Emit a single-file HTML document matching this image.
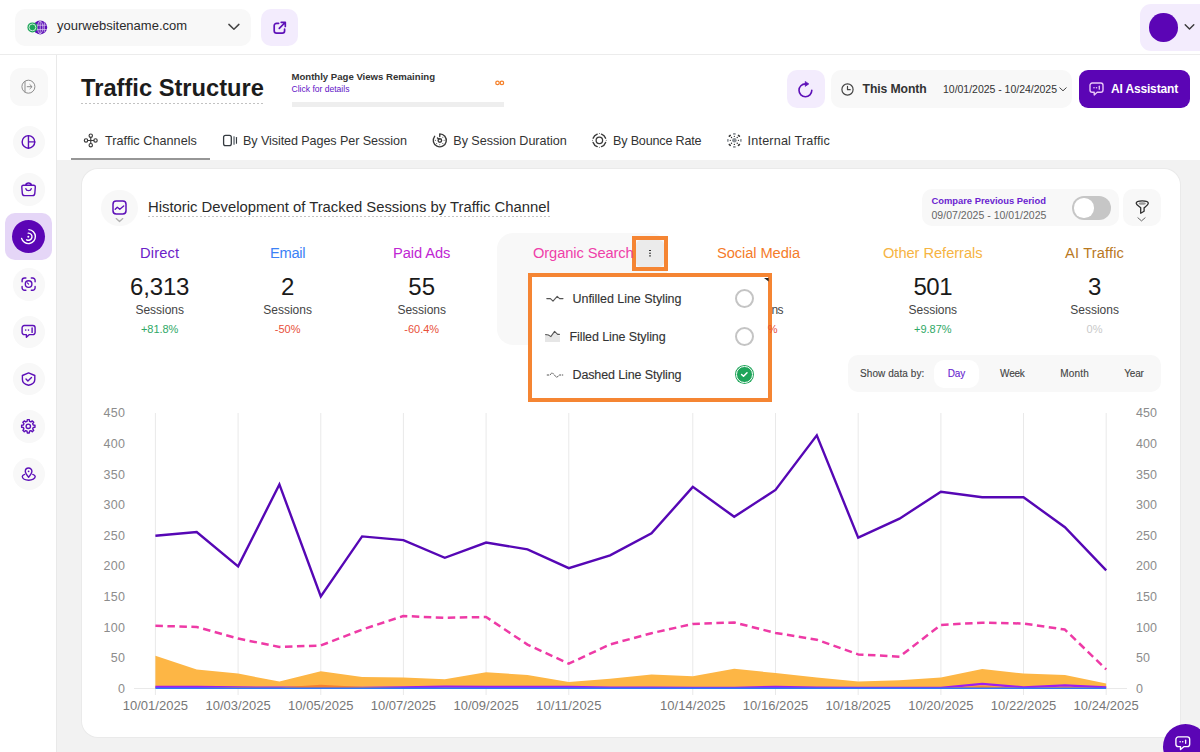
<!DOCTYPE html>
<html><head><meta charset="utf-8">
<style>
*{box-sizing:border-box;margin:0;padding:0}
html,body{width:1200px;height:752px;overflow:hidden;background:#fff}
body{font-family:"Liberation Sans",sans-serif;position:relative;color:#222}
.abs{position:absolute}
.t{position:absolute;white-space:nowrap;line-height:1}
svg{position:absolute;overflow:visible}
.sb{position:absolute;left:12.5px;width:32.4px;height:32.4px;border-radius:50%;background:#f8f8f8}
.p{fill:none;stroke:#5d10b8;stroke-width:1.5;stroke-linecap:round;stroke-linejoin:round}
.g{fill:none;stroke:#3a3a3a;stroke-width:1.3;stroke-linecap:round;stroke-linejoin:round}
</style></head><body>
<!-- top bar -->
<div class="abs" style="left:0;top:54px;width:1200px;height:1px;background:#ececec"></div>
<div class="abs" style="left:14.6px;top:9px;width:236px;height:37px;border-radius:10px;background:#f8f8f8"></div>
<svg style="left:26px;top:19px" width="24" height="17" viewBox="26 19 24 17">
  <circle cx="40.2" cy="27.4" r="7" fill="#5d10b8"/>
  <g stroke="#fff" stroke-width="0.75" fill="none" opacity="0.8">
    <ellipse cx="40.2" cy="27.4" rx="2.6" ry="6.3"/>
    <line x1="40.2" y1="21" x2="40.2" y2="34"/>
    <line x1="33.6" y1="25.2" x2="46.8" y2="25.2"/><line x1="33.6" y1="29.6" x2="46.8" y2="29.6"/>
    <line x1="44.3" y1="22.5" x2="44.3" y2="32.5"/>
  </g>
  <circle cx="32.4" cy="27.4" r="5" fill="#1fa55a"/>
  <circle cx="32.4" cy="27.4" r="3.4" fill="none" stroke="#d9f3e4" stroke-width="0.9"/>
</svg>
<svg style="left:228px;top:23px" width="12" height="8" viewBox="0 0 12 8"><path d="M0.9 1.4 L5.9 6.2 L10.9 1.4" fill="none" stroke="#444" stroke-width="1.5" stroke-linecap="round" stroke-linejoin="round"/></svg>
<div class="abs" style="left:261px;top:9px;width:37px;height:37px;border-radius:10px;background:#f3ecfd"></div>
<svg style="left:273px;top:21px" width="14" height="14" viewBox="0 0 14 14"><path class="p" style="stroke-width:1.7" d="M5.6 2.3 H3.6 A2.4 2.4 0 0 0 1.2 4.7 V9.8 A2.4 2.4 0 0 0 3.6 12.2 H9.2 A2.4 2.4 0 0 0 11.6 9.8 V8.2 M8.2 1.3 H12.3 V5.4 M12.1 1.5 L6.3 7.3"/></svg>
<!-- avatar -->
<div class="abs" style="left:1140px;top:4px;width:70px;height:47px;border-radius:11px;background:#f3ecfd"></div>
<div class="abs" style="left:1149px;top:13.2px;width:28.5px;height:28.5px;border-radius:50%;background:#5b05b5"></div>
<svg style="left:1184px;top:24px" width="11" height="7" viewBox="0 0 11 7"><path d="M1.2 0.7 L5.5 5.1 L9.8 0.7" fill="none" stroke="#3a3a3a" stroke-width="1.4" stroke-linecap="round" stroke-linejoin="round"/></svg>

<!-- sidebar -->
<div class="abs" style="left:56px;top:55px;width:1px;height:697px;background:#e9e9e9"></div>
<div class="abs" style="left:9.8px;top:68px;width:38px;height:38px;border-radius:11px;background:#f8f8f8"></div>
<div class="sb" style="top:125.9px"></div>
<div class="sb" style="top:173.4px"></div>
<div class="abs" style="left:5.3px;top:213.3px;width:46.3px;height:47.2px;border-radius:10px;background:#e5d6f7"></div>
<div class="abs" style="left:12px;top:220.3px;width:33px;height:33px;border-radius:50%;background:#5b05b5"></div>
<div class="sb" style="top:268.2px"></div>
<div class="sb" style="top:315.5px"></div>
<div class="sb" style="top:362.7px"></div>
<div class="sb" style="top:410.4px"></div>
<div class="sb" style="top:457.9px"></div>

<svg style="left:0;top:0" width="60" height="752" viewBox="0 0 60 752">
<circle cx="28.4" cy="86.7" r="6.5" fill="none" stroke="#8d8d8d" stroke-width="1"/><path d="M25 81.4 V92 M27.2 86.7 H31.8 M29.9 84.6 L32 86.7 L29.9 88.8" fill="none" stroke="#8d8d8d" stroke-width="1" stroke-linecap="round" stroke-linejoin="round"/>
<circle class="p" cx="28.45" cy="141.9" r="6.3" style="stroke-width:1.4"/><path class="p" style="stroke-width:1.4" d="M28.45 135.6 V148.2 M28.45 141.9 H34.75"/>
<path class="p" style="stroke-width:1.4" d="M23.4 185.3 H33.7 A1.6 1.6 0 0 1 35.3 187.1 L34.8 193.4 A2.4 2.4 0 0 1 32.4 195.6 H24.7 A2.4 2.4 0 0 1 22.3 193.4 L21.8 187.1 A1.6 1.6 0 0 1 23.4 185.3 Z M25.6 185.2 A3 2.7 0 0 1 31.5 185.2 M25.9 188.8 A2.7 2.3 0 0 0 31.2 188.8"/>
<g fill="none" stroke="#fff" stroke-width="1.4" stroke-linecap="round"><path d="M28.9 229.6 A7 7 0 1 1 21.6 238.4"/><path d="M28.2 233.1 A3.6 3.6 0 1 1 26.6 239.8"/></g><circle cx="28.3" cy="236.7" r="1" fill="#fff"/>
<path class="p" style="stroke-width:1.4" d="M22.1 281.8 V280.4 A2.4 2.4 0 0 1 24.5 278 H25.9 M31.3 278 H32.7 A2.4 2.4 0 0 1 35.1 280.4 V281.8 M35.1 286.4 V287.8 A2.4 2.4 0 0 1 32.7 290.2 H31.3 M25.9 290.2 H24.5 A2.4 2.4 0 0 1 22.1 287.8 V286.4"/><circle class="p" cx="28.6" cy="284.1" r="3.3" style="stroke-width:1.4"/><path class="p" style="stroke-width:1.1" d="M28.6 284.1 L27.4 282.9"/>
<path class="p" style="stroke-width:1.4" d="M24.3 325.5 H32.9 A2.2 2.2 0 0 1 35.1 327.7 V332.4 A2.2 2.2 0 0 1 32.9 334.6 H29.4 L26.4 337.3 V334.6 H24.3 A2.2 2.2 0 0 1 22.1 332.4 V327.7 A2.2 2.2 0 0 1 24.3 325.5 Z"/><circle cx="25.7" cy="330.1" r="0.8" fill="#5d10b8"/><circle cx="28.5" cy="330.1" r="0.8" fill="#5d10b8"/><path class="p" style="stroke-width:1.4" d="M32.1 327.9 V332.4"/>
<path class="p" style="stroke-width:1.4" d="M28.6 372.9 L34.8 375.5 V379.4 C34.8 382.4 32.2 384.3 28.6 385.2 C25 384.3 22.4 382.4 22.4 379.4 V375.5 Z M26 379 L27.9 380.9 L31.5 377.4"/>
<path class="p" style="stroke-width:1.4;stroke-linejoin:round" d="M34.97 425.30 L34.97 427.30 L33.25 427.53 L32.67 428.93 L33.73 430.31 L32.31 431.73 L30.93 430.67 L29.53 431.25 L29.30 432.97 L27.30 432.97 L27.07 431.25 L25.67 430.67 L24.29 431.73 L22.87 430.31 L23.93 428.93 L23.35 427.53 L21.63 427.30 L21.63 425.30 L23.35 425.07 L23.93 423.67 L22.87 422.29 L24.29 420.87 L25.67 421.93 L27.07 421.35 L27.30 419.63 L29.30 419.63 L29.53 421.35 L30.93 421.93 L32.31 420.87 L33.73 422.29 L32.67 423.67 L33.25 425.07 Z"/><circle class="p" cx="28.3" cy="426.3" r="2.2" style="stroke-width:1.4"/>
<path class="p" style="stroke-width:1.4" d="M28.6 477.2 C26.6 475 25.3 473.3 25.3 471.3 A3.3 3.3 0 0 1 31.9 471.3 C31.9 473.3 30.6 475 28.6 477.2 Z"/><circle cx="28.6" cy="471.3" r="0.9" fill="#5d10b8"/><path class="p" style="stroke-width:1.4" d="M24.6 474.4 C23.1 474.9 22.3 475.7 22.3 476.6 C22.3 478.6 25.1 480.2 28.7 480.2 C32.3 480.2 35.2 478.6 35.2 476.6 C35.2 475.7 34.4 474.9 32.8 474.4"/>
</svg>
<!-- header -->
<div class="abs" style="left:81px;top:102.6px;width:183px;height:1.4px;background:repeating-linear-gradient(90deg,#c2c2c2 0 2px,transparent 2px 4px)"></div>
<div class="abs" style="left:291.5px;top:101.7px;width:212.6px;height:5.8px;background:#eeeeee"></div>
<svg style="left:0;top:0" width="1200" height="120" viewBox="0 0 1200 120"><g fill="none" stroke="#f5812a" stroke-width="1.25"><ellipse cx="497.5" cy="82.9" rx="1.75" ry="1.7"/><ellipse cx="501.9" cy="82.9" rx="1.75" ry="1.7"/></g></svg>
<!-- tabs icons -->
<svg style="left:0;top:0" width="1200" height="160" viewBox="0 0 1200 160"><g class="g" style="stroke-width:1.15"><circle cx="90.76" cy="135.73" r="1.7"/><circle cx="90.76" cy="145.23" r="1.7"/><circle cx="86.01" cy="140.48" r="1.7"/><circle cx="95.51" cy="140.48" r="1.7"/><path d="M90.76 137.42999999999998 V143.53 M87.71000000000001 140.48 H93.81"/></g></svg>
<svg style="left:0;top:0" width="1200" height="160" viewBox="0 0 1200 160"><rect x="223.6" y="135.4" width="7.7" height="10.3" rx="1.9" fill="none" stroke="#353b40" stroke-width="1.3"/><rect x="233.15" y="136.2" width="1.8" height="8.5" rx="0.5" fill="#8b9197"/><rect x="235.9" y="137" width="1.15" height="6.8" rx="0.5" fill="#353b40"/></svg>
<svg style="left:0;top:0" width="1200" height="160" viewBox="0 0 1200 160"><g class="g" style="stroke-width:1.4"><path d="M439.76 136.46 V133.86 A6.5 6.5 0 1 1 434.64 136.36"/><circle cx="439.86" cy="140.56" r="1.75"/><path d="M438.86 139.36 L437.46 138.06"/></g><circle cx="444.11" cy="140.36" r="0.5" fill="#3a3a3a"/><circle cx="442.84" cy="143.44" r="0.5" fill="#3a3a3a"/><circle cx="439.76" cy="144.71" r="0.5" fill="#3a3a3a"/><circle cx="436.68" cy="143.44" r="0.5" fill="#3a3a3a"/><circle cx="435.41" cy="140.36" r="0.5" fill="#3a3a3a"/><circle cx="442.84" cy="137.28" r="0.5" fill="#3a3a3a"/></svg>
<svg style="left:0;top:0" width="1200" height="160" viewBox="0 0 1200 160"><g class="g" style="stroke-width:1.4"><path d="M605.60 142.51 A6.6 6.6 0 0 1 601.51 146.60 M597.21 146.60 A6.6 6.6 0 0 1 593.12 142.51 M593.12 138.21 A6.6 6.6 0 0 1 597.21 134.12 M601.51 134.12 A6.6 6.6 0 0 1 605.60 138.21 "/><circle cx="599.36" cy="140.36" r="3.25" style="stroke-width:1.3"/></g><circle cx="606.26" cy="140.36" r="0.5" fill="#555"/><circle cx="599.36" cy="147.26" r="0.5" fill="#555"/><circle cx="592.46" cy="140.36" r="0.5" fill="#555"/><circle cx="599.36" cy="133.46" r="0.5" fill="#555"/></svg>
<svg style="left:0;top:0" width="1200" height="160" viewBox="0 0 1200 160"><circle cx="734.36" cy="140.36" r="2.25" fill="#8b9197"/><circle cx="738.41" cy="140.36" r="0.68" fill="#2d2d2d"/><rect x="-1.30" y="-0.80" width="2.6" height="1.6" rx="0.5" fill="#8b9197" transform="translate(740.86 140.36) rotate(90)"/><circle cx="737.22" cy="143.22" r="0.68" fill="#2d2d2d"/><rect x="-1.30" y="-0.80" width="2.6" height="1.6" rx="0.5" fill="#3a3a3a" transform="translate(738.96 144.96) rotate(135)"/><circle cx="734.36" cy="144.41" r="0.68" fill="#2d2d2d"/><rect x="-1.30" y="-0.80" width="2.6" height="1.6" rx="0.5" fill="#8b9197" transform="translate(734.36 146.86) rotate(180)"/><circle cx="731.50" cy="143.22" r="0.68" fill="#2d2d2d"/><rect x="-1.30" y="-0.80" width="2.6" height="1.6" rx="0.5" fill="#3a3a3a" transform="translate(729.76 144.96) rotate(225)"/><circle cx="730.31" cy="140.36" r="0.68" fill="#2d2d2d"/><rect x="-1.30" y="-0.80" width="2.6" height="1.6" rx="0.5" fill="#8b9197" transform="translate(727.86 140.36) rotate(270)"/><circle cx="731.50" cy="137.50" r="0.68" fill="#2d2d2d"/><rect x="-1.30" y="-0.80" width="2.6" height="1.6" rx="0.5" fill="#3a3a3a" transform="translate(729.76 135.76) rotate(315)"/><circle cx="734.36" cy="136.31" r="0.68" fill="#2d2d2d"/><rect x="-1.30" y="-0.80" width="2.6" height="1.6" rx="0.5" fill="#8b9197" transform="translate(734.36 133.86) rotate(360)"/><circle cx="737.22" cy="137.50" r="0.68" fill="#2d2d2d"/><rect x="-1.30" y="-0.80" width="2.6" height="1.6" rx="0.5" fill="#3a3a3a" transform="translate(738.96 135.76) rotate(405)"/></svg>
<!-- header right -->
<div class="abs" style="left:787px;top:70px;width:37.5px;height:38px;border-radius:10px;background:#f3ecfd"></div>
<svg style="left:0;top:0" width="1200" height="120" viewBox="0 0 1200 120"><path d="M805.4 83.9 A6.4 6.4 0 1 0 811.8 90.3" fill="none" stroke="#5d10b8" stroke-width="1.6" stroke-linecap="round"/><path d="M805.2 81.4 L808.9 83.9 L805.2 86.4 Z" fill="#5d10b8" stroke="#5d10b8" stroke-width="0.6" stroke-linejoin="round"/></svg>
<div class="abs" style="left:831px;top:70px;width:241px;height:38px;border-radius:10px;background:#f8f8f8"></div>
<svg style="left:840.5px;top:82.5px" width="13" height="13" viewBox="0 0 13 13"><circle cx="6.5" cy="6.5" r="5.6" fill="none" stroke="#444" stroke-width="1.2"/><path d="M6.5 3.4 V6.7 H9.2" fill="none" stroke="#444" stroke-width="1.2" stroke-linecap="round" stroke-linejoin="round"/></svg>
<svg style="left:1058.5px;top:86.5px" width="8" height="5" viewBox="0 0 8 5"><path d="M0.8 0.8 L4 3.8 L7.2 0.8" fill="none" stroke="#444" stroke-width="1" stroke-linecap="round" stroke-linejoin="round"/></svg>
<div class="abs" style="left:1079px;top:70px;width:111px;height:38px;border-radius:9px;background:#5b05b5"></div>
<svg style="left:1088.5px;top:82px" width="15" height="14" viewBox="0 0 15 14"><path d="M3.2 1 H11.8 A2.2 2.2 0 0 1 14 3.2 V8 A2.2 2.2 0 0 1 11.8 10.2 H8.2 L5.2 12.9 V10.2 H3.2 A2.2 2.2 0 0 1 1 8 V3.2 A2.2 2.2 0 0 1 3.2 1 Z" fill="none" stroke="#e9c6f7" stroke-width="1.4" stroke-linejoin="round"/><circle cx="5" cy="5.7" r="0.8" fill="#e9c6f7"/><circle cx="7.5" cy="5.7" r="0.8" fill="#e9c6f7"/><path d="M10.3 4.2 V7.2" stroke="#e9c6f7" stroke-width="1.3" stroke-linecap="round"/></svg>
<!-- tab underline -->
<div class="abs" style="left:71px;top:158.2px;width:139px;height:1.8px;background:#969696"></div>

<!-- content -->
<div class="abs" style="left:57px;top:160px;width:1143px;height:592px;background:#f2f2f2"></div>
<div class="abs" style="left:81.5px;top:169.4px;width:1098.3px;height:567.4px;background:#fff;border-radius:16px;box-shadow:0 0 0 1px #eaeaea"></div>
<!-- card header -->
<div class="abs" style="left:101.3px;top:189.7px;width:36.3px;height:36.3px;border-radius:50%;background:#f8f8f8"></div>
<svg style="left:111.9px;top:200.1px" width="15" height="15" viewBox="0 0 15 15"><rect class="p" x="1" y="1" width="13" height="13" rx="3.2" style="stroke-width:1.5"/><path class="p" style="stroke-width:1.4" d="M3.2 9.2 L5.3 7.2 L7.8 9.2 L11.7 6"/></svg>
<svg style="left:114.9px;top:217.6px" width="9" height="5" viewBox="0 0 9 5"><path d="M1.2 0.6 L4.5 3.6 L7.8 0.6" fill="none" stroke="#b0b0b0" stroke-width="1.3" stroke-linecap="round" stroke-linejoin="round"/></svg>
<div class="abs" style="left:148px;top:215.5px;width:402px;height:1.2px;background:repeating-linear-gradient(90deg,#c4c4c4 0 2px,transparent 2px 4px)"></div>
<div class="abs" style="left:922px;top:189px;width:197px;height:37px;border-radius:10px;background:#f8f8f8"></div>
<div class="abs" style="left:1072px;top:196px;width:38.5px;height:23.5px;border-radius:12px;background:#c6c6c6"></div>
<div class="abs" style="left:1074.3px;top:198px;width:19.5px;height:19.5px;border-radius:50%;background:#fff"></div>
<div class="abs" style="left:1123px;top:189px;width:37.5px;height:37px;border-radius:10px;background:#f8f8f8"></div>
<svg style="left:0;top:0" width="1200" height="240" viewBox="0 0 1200 240"><ellipse cx="1142.2" cy="203.5" rx="3.6" ry="1.3" fill="#9a9a9a"/><path d="M1136.2 203.3 C1136.2 201.5 1139 200.9 1142.2 200.9 C1145.4 200.9 1148.3 201.5 1148.3 203.3 C1148.3 205 1145.3 206.6 1144.1 207.8 V211.2 L1140.7 213.2 V207.8 C1139.5 206.6 1136.2 205 1136.2 203.3 Z" fill="none" stroke="#2f2f2f" stroke-width="1.3" stroke-linejoin="round"/></svg>
<svg style="left:1137.3px;top:217.3px" width="9" height="5" viewBox="0 0 9 5"><path d="M0.9 0.8 L4.5 3.9 L8.1 0.8" fill="none" stroke="#666" stroke-width="1" stroke-linecap="round" stroke-linejoin="round"/></svg>
<!-- organic highlight -->
<div class="abs" style="left:497.3px;top:233px;width:170px;height:112px;border-radius:16px;background:#f8f8f8"></div>
<!-- show data by -->
<div class="abs" style="left:848px;top:355px;width:313px;height:37px;border-radius:10px;background:#f8f8f8"></div>
<div class="abs" style="left:933.6px;top:360px;width:45.6px;height:28px;border-radius:10px;background:#fff"></div>
<svg class="abs" style="left:0;top:0" width="1200" height="752" viewBox="0 0 1200 752">
<line x1="155.4" y1="413" x2="155.4" y2="695" stroke="#e9e9e9" stroke-width="1"/>
<line x1="238.1" y1="413" x2="238.1" y2="695" stroke="#e9e9e9" stroke-width="1"/>
<line x1="320.8" y1="413" x2="320.8" y2="695" stroke="#e9e9e9" stroke-width="1"/>
<line x1="403.4" y1="413" x2="403.4" y2="695" stroke="#e9e9e9" stroke-width="1"/>
<line x1="486.1" y1="413" x2="486.1" y2="695" stroke="#e9e9e9" stroke-width="1"/>
<line x1="568.8" y1="413" x2="568.8" y2="695" stroke="#e9e9e9" stroke-width="1"/>
<line x1="692.8" y1="413" x2="692.8" y2="695" stroke="#e9e9e9" stroke-width="1"/>
<line x1="775.5" y1="413" x2="775.5" y2="695" stroke="#e9e9e9" stroke-width="1"/>
<line x1="858.2" y1="413" x2="858.2" y2="695" stroke="#e9e9e9" stroke-width="1"/>
<line x1="940.9" y1="413" x2="940.9" y2="695" stroke="#e9e9e9" stroke-width="1"/>
<line x1="1023.5" y1="413" x2="1023.5" y2="695" stroke="#e9e9e9" stroke-width="1"/>
<line x1="1106.2" y1="413" x2="1106.2" y2="695" stroke="#e9e9e9" stroke-width="1"/>
<line x1="134" y1="688.5" x2="155.4" y2="688.5" stroke="#e9e9e9" stroke-width="1"/>
<line x1="1106.2" y1="688.5" x2="1127" y2="688.5" stroke="#e9e9e9" stroke-width="1"/>
<polygon points="155.4,688.2 155.4,655.8 196.7,669.4 238.1,673.6 279.4,681.6 320.8,671.3 362.1,676.9 403.4,677.4 444.8,679.2 486.1,672.3 527.5,675.0 568.8,681.9 610.1,678.7 651.5,674.4 692.8,676.3 734.2,668.7 775.5,673.1 816.8,677.5 858.2,681.6 899.5,680.2 940.9,677.4 982.2,668.9 1023.5,673.6 1064.9,675.0 1106.2,683.4 1106.2,688.2" fill="#fdb645"/>
<polyline points="155.4,686.8 196.7,686.8 238.1,687.5 279.4,687.7 320.8,687.9 362.1,687.9 403.4,687.5 444.8,686.7 486.1,686.8 527.5,687.0 568.8,687.0 610.1,687.7 651.5,687.7 692.8,687.9 734.2,687.9 775.5,686.9 816.8,687.7 858.2,687.9 899.5,687.9 940.9,687.9 982.2,683.9 1023.5,687.3 1064.9,685.3 1106.2,687.3" fill="none" stroke="#9d1cf2" stroke-width="2.3" stroke-linejoin="round"/>
<polygon points="155.4,688.2 155.4,687.9 196.7,687.9 238.1,687.3 279.4,687.6 320.8,684.8 362.1,687.0 403.4,687.9 444.8,687.9 486.1,687.9 527.5,687.9 568.8,687.9 610.1,687.9 651.5,687.9 692.8,687.9 734.2,687.9 775.5,687.9 816.8,687.9 858.2,687.9 899.5,687.9 940.9,687.9 982.2,686.1 1023.5,687.9 1064.9,687.3 1106.2,687.9 1106.2,688.2" fill="#f47c2c" fill-opacity="0.9"/>
<polyline points="155.4,688.2 196.7,688.2 238.1,688.2 279.4,688.2 320.8,688.2 362.1,688.2 403.4,688.2 444.8,688.2 486.1,688.2 527.5,688.2 568.8,688.2 610.1,688.2 651.5,688.2 692.8,688.2 734.2,688.2 775.5,688.2 816.8,688.2 858.2,688.2 899.5,688.2 940.9,688.2 982.2,688.2 1023.5,688.2 1064.9,688.2 1106.2,688.2" fill="none" stroke="#2f78f5" stroke-width="1.5"/>
<polyline points="155.4,625.8 196.7,627.0 238.1,638.6 279.4,646.9 320.8,645.5 362.1,629.6 403.4,616.0 444.8,617.8 486.1,617.0 527.5,644.6 568.8,663.7 610.1,644.4 651.5,633.2 692.8,623.9 734.2,622.5 775.5,632.9 816.8,639.7 858.2,654.4 899.5,656.7 940.9,624.9 982.2,622.7 1023.5,623.5 1064.9,629.6 1106.2,669.4" fill="none" stroke="#ee3aa6" stroke-width="2.5" stroke-dasharray="7.5 4.5" stroke-linejoin="round"/>
<polyline points="155.4,535.8 196.7,532.1 238.1,566.4 279.4,484.4 320.8,596.4 362.1,536.4 403.4,540.1 444.8,557.8 486.1,542.5 527.5,549.3 568.8,568.2 610.1,555.4 651.5,533.4 692.8,486.9 734.2,516.8 775.5,489.9 816.8,435.4 858.2,537.6 899.5,518.7 940.9,491.7 982.2,497.3 1023.5,497.3 1064.9,527.2 1106.2,570.4" fill="none" stroke="#5607b5" stroke-width="2.4" stroke-linejoin="miter"/>
</svg>
<!-- more button + orange boxes -->
<div class="abs" style="left:635.8px;top:240px;width:28.4px;height:27px;border-radius:5px;background:#ebebeb"></div>
<div class="abs" style="left:649.1px;top:249.9px;width:1.8px;height:1.6px;background:#333;box-shadow:0 2.7px 0 #333,0 5.4px 0 #333"></div>
<div class="abs" style="left:632px;top:236px;width:36px;height:35px;border:4px solid #f58533"></div>
<div class="abs" style="left:528px;top:273px;width:244px;height:129px;background:#fff;border:4.2px solid #f58533"></div>
<!-- menu icons -->
<svg style="left:545.5px;top:294px" width="18" height="10" viewBox="0 0 18 10"><path d="M0.8 4.6 H4.4 L7 7.2 L11.2 2.4 L13.6 4.6 H17" fill="none" stroke="#555" stroke-width="1.1" stroke-linejoin="round" stroke-linecap="round"/></svg>
<svg style="left:545.2px;top:329.8px" width="15" height="12" viewBox="0 0 15 12"><path d="M0 5.6 L3 6 L5.6 7.4 L9.6 2.4 L12.6 5.2 L15 5.4 V12 H0 Z" fill="#e6e6e6"/><path d="M0.6 4.6 L3.4 5 L5.8 6.6 L9.6 1.4 L12.6 4.4 L14.4 4.4" fill="none" stroke="#555" stroke-width="1.1" stroke-linejoin="round" stroke-linecap="round"/></svg>
<svg style="left:545.5px;top:369.5px" width="18" height="10" viewBox="0 0 18 10"><path d="M0.8 5 H3.8 L6.2 2.7 L10.8 7.5 L13.2 5 H17.2" fill="none" stroke="#555" stroke-width="1" stroke-linejoin="round" stroke-dasharray="2.4 0.8"/></svg>
<!-- radios -->
<div class="abs" style="left:735px;top:289.1px;width:19.3px;height:19.3px;border-radius:50%;border:2.1px solid #c4c4c4;background:#fff"></div>
<div class="abs" style="left:735px;top:326.8px;width:19.3px;height:19.3px;border-radius:50%;border:2.1px solid #c4c4c4;background:#fff"></div>
<div class="abs" style="left:734.9px;top:364.9px;width:19.3px;height:19.3px;border-radius:50%;background:#1fa55a"></div>
<div class="abs" style="left:736.3px;top:366.3px;width:16.5px;height:16.5px;border-radius:50%;border:1.1px solid #fff"></div>
<svg style="left:740.3px;top:371.3px" width="9" height="7" viewBox="0 0 9 7"><path d="M1.6 3.5 L3.5 5.3 L7 1.8" fill="none" stroke="#fff" stroke-width="1.5" stroke-linecap="round" stroke-linejoin="round"/></svg>
<svg style="left:763.5px;top:277.5px" width="5" height="4" viewBox="0 0 5 4"><path d="M0 0 H4.6 V3.6 Z" fill="#222"/></svg>
<!-- chat bubble -->
<div class="abs" style="left:1163px;top:724px;width:45px;height:45px;border-radius:50%;background:#5b05b5"></div>
<svg style="left:1174.6px;top:736.3px" width="15.6" height="14.7" viewBox="0 0 17 16"><path d="M3.6 1 H13.4 A2.6 2.6 0 0 1 16 3.6 V9 A2.6 2.6 0 0 1 13.4 11.6 H9.6 L6 14.8 V11.6 H3.6 A2.6 2.6 0 0 1 1 9 V3.6 A2.6 2.6 0 0 1 3.6 1 Z" fill="none" stroke="#fff" stroke-width="1.5" stroke-linejoin="round"/><circle cx="5.6" cy="6.3" r="0.9" fill="#fff"/><circle cx="8.4" cy="6.3" r="0.9" fill="#fff"/><path d="M11.6 4.6 V8" stroke="#fff" stroke-width="1.4" stroke-linecap="round"/></svg>
<span class="t" style="left:57.0px;top:19.3px;font-size:13px;color:#2b2b2b;">yourwebsitename.com</span>
<span class="t" style="left:81.0px;top:76.5px;font-size:23.7px;color:#1c1c1c;font-weight:700;">Traffic Structure</span>
<span class="t" style="left:291.5px;top:72.0px;font-size:9.6px;color:#333;font-weight:700;letter-spacing:-0.01px;">Monthly Page Views Remaining</span>
<span class="t" style="left:291.5px;top:85.3px;font-size:8.6px;color:#5f14c7;letter-spacing:-0.02px;">Click for details</span>
<span class="t" style="left:105.0px;top:134.6px;font-size:12.6px;color:#333;letter-spacing:0.06px;">Traffic Channels</span>
<span class="t" style="left:243.0px;top:134.6px;font-size:12.6px;color:#333;letter-spacing:-0.09px;">By Visited Pages Per Session</span>
<span class="t" style="left:453.3px;top:134.6px;font-size:12.6px;color:#333;letter-spacing:-0.04px;">By Session Duration</span>
<span class="t" style="left:613.0px;top:134.6px;font-size:12.6px;color:#333;letter-spacing:-0.19px;">By Bounce Rate</span>
<span class="t" style="left:747.6px;top:134.6px;font-size:12.6px;color:#333;letter-spacing:0.18px;">Internal Traffic</span>
<span class="t" style="left:862.6px;top:83.2px;font-size:12.2px;color:#333;font-weight:700;letter-spacing:-0.10px;">This Month</span>
<span class="t" style="left:943.0px;top:84.4px;font-size:10.5px;color:#333;letter-spacing:-0.02px;">10/01/2025 - 10/24/2025</span>
<span class="t" style="left:1111.0px;top:82.9px;font-size:12px;color:#fff;font-weight:700;letter-spacing:-0.16px;">AI Assistant</span>
<span class="t" style="left:148.0px;top:199.7px;font-size:14.85px;color:#2a2a2a;letter-spacing:-0.01px;">Historic Development of Tracked Sessions by Traffic Channel</span>
<span class="t" style="left:931.5px;top:196.3px;font-size:9.4px;color:#6a1fd0;font-weight:700;letter-spacing:-0.01px;">Compare Previous Period</span>
<span class="t" style="left:931.5px;top:209.7px;font-size:10.5px;color:#666;letter-spacing:0.02px;">09/07/2025 - 10/01/2025</span>
<span class="t" style="left:140.0px;top:246.2px;font-size:14.7px;color:#6b21c8;letter-spacing:0.16px;">Direct</span>
<span class="t" style="left:130.1px;top:275.0px;font-size:24px;color:#1a1a1a;letter-spacing:-0.17px;">6,313</span>
<span class="t" style="left:135.4px;top:304.0px;font-size:12px;color:#444;letter-spacing:-0.01px;">Sessions</span>
<span class="t" style="left:140.9px;top:323.8px;font-size:11px;color:#2fa866;letter-spacing:-0.02px;">+81.8%</span>
<span class="t" style="left:270.1px;top:246.2px;font-size:14.7px;color:#3b82f6;letter-spacing:-0.35px;">Email</span>
<span class="t" style="left:280.9px;top:275.0px;font-size:24px;color:#1a1a1a;">2</span>
<span class="t" style="left:263.3px;top:304.0px;font-size:12px;color:#444;letter-spacing:-0.01px;">Sessions</span>
<span class="t" style="left:274.8px;top:323.8px;font-size:11px;color:#e8503a;">-50%</span>
<span class="t" style="left:392.9px;top:246.2px;font-size:14.7px;color:#c026d3;letter-spacing:-0.06px;">Paid Ads</span>
<span class="t" style="left:408.3px;top:275.0px;font-size:24px;color:#1a1a1a;">55</span>
<span class="t" style="left:397.4px;top:304.0px;font-size:12px;color:#444;letter-spacing:-0.01px;">Sessions</span>
<span class="t" style="left:404.3px;top:323.8px;font-size:11px;color:#e8503a;">-60.4%</span>
<span class="t" style="left:883.0px;top:246.2px;font-size:14.7px;color:#f6b443;letter-spacing:-0.06px;">Other Referrals</span>
<span class="t" style="left:913.4px;top:275.0px;font-size:24px;color:#1a1a1a;letter-spacing:-0.42px;">501</span>
<span class="t" style="left:908.5px;top:304.0px;font-size:12px;color:#444;letter-spacing:-0.01px;">Sessions</span>
<span class="t" style="left:914.0px;top:323.8px;font-size:11px;color:#2fa866;">+9.87%</span>
<span class="t" style="left:1065.1px;top:246.2px;font-size:14.7px;color:#b9791f;letter-spacing:0.13px;">AI Traffic</span>
<span class="t" style="left:1087.9px;top:275.0px;font-size:24px;color:#1a1a1a;">3</span>
<span class="t" style="left:1070.3px;top:304.0px;font-size:12px;color:#444;letter-spacing:-0.01px;">Sessions</span>
<span class="t" style="left:1086.6px;top:323.8px;font-size:11px;color:#c9c9c9;">0%</span>
<span class="t" style="left:533.0px;top:246.2px;font-size:14.7px;color:#ef3fa9;letter-spacing:-0.10px;">Organic Search</span>
<span class="t" style="left:717.0px;top:246.2px;font-size:14.7px;color:#f57c2a;letter-spacing:-0.09px;">Social Media</span>
<span class="t" style="left:771.5px;top:304.0px;font-size:12px;color:#444;letter-spacing:-0.59px;">ns</span>
<span class="t" style="left:767.8px;top:324.3px;font-size:11px;color:#e8503a;">%</span>
<span class="t" style="left:572.5px;top:293.0px;font-size:12.5px;color:#333;letter-spacing:-0.04px;-webkit-text-stroke:0.12px currentColor;">Unfilled Line Styling</span>
<span class="t" style="left:569.5px;top:330.5px;font-size:12.5px;color:#333;letter-spacing:-0.10px;-webkit-text-stroke:0.12px currentColor;">Filled Line Styling</span>
<span class="t" style="left:572.5px;top:368.5px;font-size:12.5px;color:#333;letter-spacing:-0.12px;-webkit-text-stroke:0.12px currentColor;">Dashed Line Styling</span>
<span class="t" style="left:860.0px;top:368.8px;font-size:10px;color:#444;letter-spacing:0.08px;-webkit-text-stroke:0.12px currentColor;">Show data by:</span>
<span class="t" style="left:947.8px;top:368.8px;font-size:10px;color:#6a1fd0;letter-spacing:-0.20px;-webkit-text-stroke:0.12px currentColor;">Day</span>
<span class="t" style="left:1000.1px;top:368.8px;font-size:10px;color:#444;letter-spacing:-0.20px;-webkit-text-stroke:0.12px currentColor;">Week</span>
<span class="t" style="left:1060.2px;top:368.8px;font-size:10px;color:#444;letter-spacing:0.20px;-webkit-text-stroke:0.12px currentColor;">Month</span>
<span class="t" style="left:1124.3px;top:368.8px;font-size:10px;color:#444;letter-spacing:-0.20px;-webkit-text-stroke:0.12px currentColor;">Year</span>
<span class="t" style="left:103.5px;top:407.4px;font-size:12.5px;color:#8c8c8c;letter-spacing:0.32px;">450</span>
<span class="t" style="left:1136.0px;top:407.4px;font-size:12.5px;color:#8c8c8c;letter-spacing:0.05px;">450</span>
<span class="t" style="left:103.5px;top:438.0px;font-size:12.5px;color:#8c8c8c;letter-spacing:0.32px;">400</span>
<span class="t" style="left:1136.0px;top:438.0px;font-size:12.5px;color:#8c8c8c;letter-spacing:0.05px;">400</span>
<span class="t" style="left:103.5px;top:468.6px;font-size:12.5px;color:#8c8c8c;letter-spacing:0.32px;">350</span>
<span class="t" style="left:1136.0px;top:468.6px;font-size:12.5px;color:#8c8c8c;letter-spacing:0.05px;">350</span>
<span class="t" style="left:103.5px;top:499.2px;font-size:12.5px;color:#8c8c8c;letter-spacing:0.32px;">300</span>
<span class="t" style="left:1136.0px;top:499.2px;font-size:12.5px;color:#8c8c8c;letter-spacing:0.05px;">300</span>
<span class="t" style="left:103.5px;top:529.8px;font-size:12.5px;color:#8c8c8c;letter-spacing:0.32px;">250</span>
<span class="t" style="left:1136.0px;top:529.8px;font-size:12.5px;color:#8c8c8c;letter-spacing:0.05px;">250</span>
<span class="t" style="left:103.5px;top:560.4px;font-size:12.5px;color:#8c8c8c;letter-spacing:0.32px;">200</span>
<span class="t" style="left:1136.0px;top:560.4px;font-size:12.5px;color:#8c8c8c;letter-spacing:0.05px;">200</span>
<span class="t" style="left:103.5px;top:591.0px;font-size:12.5px;color:#8c8c8c;letter-spacing:0.32px;">150</span>
<span class="t" style="left:1136.0px;top:591.0px;font-size:12.5px;color:#8c8c8c;letter-spacing:0.05px;">150</span>
<span class="t" style="left:103.5px;top:621.6px;font-size:12.5px;color:#8c8c8c;letter-spacing:0.32px;">100</span>
<span class="t" style="left:1136.0px;top:621.6px;font-size:12.5px;color:#8c8c8c;letter-spacing:0.05px;">100</span>
<span class="t" style="left:110.8px;top:652.2px;font-size:12.5px;color:#8c8c8c;letter-spacing:0.32px;">50</span>
<span class="t" style="left:1136.0px;top:652.2px;font-size:12.5px;color:#8c8c8c;letter-spacing:0.05px;">50</span>
<span class="t" style="left:118.0px;top:682.8px;font-size:12.5px;color:#8c8c8c;letter-spacing:0.32px;">0</span>
<span class="t" style="left:1136.0px;top:682.8px;font-size:12.5px;color:#8c8c8c;letter-spacing:0.05px;">0</span>
<span class="t" style="left:122.7px;top:699.2px;font-size:13px;color:#777;letter-spacing:0.03px;">10/01/2025</span>
<span class="t" style="left:205.4px;top:699.2px;font-size:13px;color:#777;letter-spacing:0.03px;">10/03/2025</span>
<span class="t" style="left:288.1px;top:699.2px;font-size:13px;color:#777;letter-spacing:0.03px;">10/05/2025</span>
<span class="t" style="left:370.7px;top:699.2px;font-size:13px;color:#777;letter-spacing:0.03px;">10/07/2025</span>
<span class="t" style="left:453.4px;top:699.2px;font-size:13px;color:#777;letter-spacing:0.03px;">10/09/2025</span>
<span class="t" style="left:536.1px;top:699.2px;font-size:13px;color:#777;letter-spacing:0.13px;">10/11/2025</span>
<span class="t" style="left:660.1px;top:699.2px;font-size:13px;color:#777;letter-spacing:0.03px;">10/14/2025</span>
<span class="t" style="left:742.8px;top:699.2px;font-size:13px;color:#777;letter-spacing:0.03px;">10/16/2025</span>
<span class="t" style="left:825.5px;top:699.2px;font-size:13px;color:#777;letter-spacing:0.03px;">10/18/2025</span>
<span class="t" style="left:908.2px;top:699.2px;font-size:13px;color:#777;letter-spacing:0.03px;">10/20/2025</span>
<span class="t" style="left:990.8px;top:699.2px;font-size:13px;color:#777;letter-spacing:0.03px;">10/22/2025</span>
<span class="t" style="left:1073.5px;top:699.2px;font-size:13px;color:#777;letter-spacing:0.03px;">10/24/2025</span>
</body></html>
